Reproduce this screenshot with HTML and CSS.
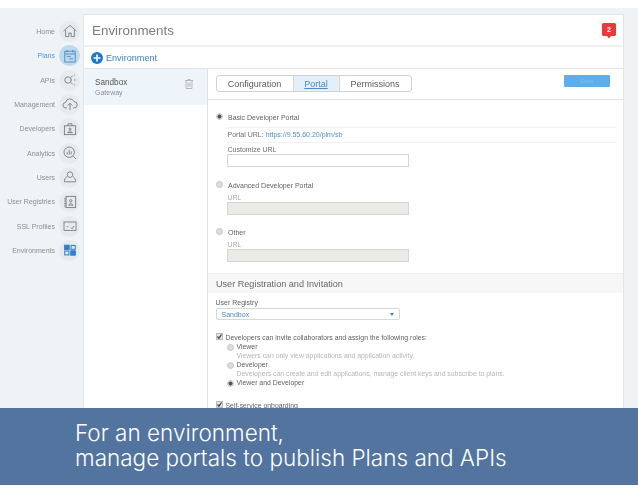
FILE: index.html
```html
<!DOCTYPE html>
<html lang="en">
<head>
<meta charset="utf-8">
<title>Environments</title>
<link rel="stylesheet" href="styles.css">
</head>
<body>
<div class="slide">
  <div class="app">
    <nav class="nav">
      <div class="nav-item"><span class="nav-label">Home</span><span class="nav-icon"><svg viewBox="0 0 20 20"><path d="M2 10 10 3l8 7M4.500 8.500V17h4v-4.500h3V17h4V8.500"/></svg></span></div>
      <div class="nav-item active"><span class="nav-label">Plans</span><span class="nav-icon"><svg viewBox="0 0 20 20"><rect x="3.500" y="4" width="13" height="13.500"/><path d="M6.500 2.500v3M13.500 2.500v3M3.500 7.500h13M6 10.500h5M9 13.500h5"/></svg></span></div>
      <div class="nav-item"><span class="nav-label">APIs</span><span class="nav-icon"><svg viewBox="0 0 20 20"><circle cx="7.500" cy="10" r="4"/><path d="M11 7 13.500 4.500M11.500 10h1M11 13l2.500 2.500M15 4h1M15 10h2M15 16h1"/></svg></span></div>
      <div class="nav-item"><span class="nav-label">Management</span><span class="nav-icon"><svg viewBox="0 0 20 20"><path d="M6 15H5a3.500 3.500 0 0 1-.5-7A5.500 5.500 0 0 1 15 7a4 4 0 0 1 0 8h-1M10 17.500V9.500M7 12l3-3 3 3"/></svg></span></div>
      <div class="nav-item"><span class="nav-label">Developers</span><span class="nav-icon"><svg viewBox="0 0 20 20"><rect x="3" y="6" width="14" height="11"/><path d="M7.500 6V3.500h5V6M6.500 14.500h7M8 14.500c0-3 4-3 4 0"/><circle cx="10" cy="10" r="1.200"/></svg></span></div>
      <div class="nav-item"><span class="nav-label">Analytics</span><span class="nav-icon"><svg viewBox="0 0 20 20"><circle cx="9" cy="9" r="6.500"/><path d="M14 14l3.500 3.500M6.500 12V9M9 12V6M11.500 12V8"/></svg></span></div>
      <div class="nav-item"><span class="nav-label">Users</span><span class="nav-icon"><svg viewBox="0 0 20 20"><circle cx="10" cy="7" r="3.500"/><path d="M6.500 9.500C4 11 3 13 3 16h14c0-3-1-5-3.500-6.500"/></svg></span></div>
      <div class="nav-item"><span class="nav-label">User Registries</span><span class="nav-icon"><svg viewBox="0 0 20 20"><rect x="5" y="3" width="12" height="14"/><path d="M2.500 6h3M2.500 9h3M2.500 12h3M2.500 15h3M8 14h6M9 14c0-3 4-3 4 0"/><circle cx="11" cy="8.500" r="1.500"/></svg></span></div>
      <div class="nav-item"><span class="nav-label">SSL Profiles</span><span class="nav-icon"><svg viewBox="0 0 20 20"><rect x="2.500" y="5" width="15" height="10.500"/><path d="M6 11h2M11 12l1.500 1.500L15 10"/></svg></span></div>
      <div class="nav-item"><span class="nav-label">Environments</span><span class="nav-icon env"><svg viewBox="0 0 20 20"><rect x="2" y="3" width="7" height="6.500"/><rect x="11.500" y="3.500" width="6" height="5.500" class="hollow"/><rect x="2.500" y="11.500" width="6" height="5.500" class="hollow"/><rect x="11" y="11" width="7" height="6.500"/></svg></span></div>
    </nav>
    <main class="panel">
      <header class="head">
        <h1 class="title">Environments</h1>
        <svg class="badge" viewBox="0 0 14 16"><path d="M1.500 0h11A1.500 1.500 0 0 1 14 1.500v10a1.500 1.500 0 0 1-1.500 1.500H9l-2 2.500L5 13H1.500A1.500 1.500 0 0 1 0 11.500v-10A1.500 1.500 0 0 1 1.500 0z"/><text x="7" y="8.500">2</text></svg>
      </header>
      <div class="toolbar">
        <svg class="plus" viewBox="0 0 12 12"><circle cx="6" cy="6" r="6"/><path d="M6 2.500v7M2.500 6h7"/></svg>
        <span>Environment</span>
      </div>
      <div class="body">
        <aside class="list">
          <div class="list-item">
            <div>
              <div class="list-name">Sandbox</div>
              <div class="list-sub">Gateway</div>
            </div>
            <svg class="trash" viewBox="0 0 8 10"><path d="M0 1.500h8M3 1.500V.5h2v1M1 1.500V9.500h6V1.500M3 3.500v4.500M5 3.500v4.500"/></svg>
          </div>
        </aside>
        <section class="detail">
          <div class="detail-top">
            <div class="tabs">
              <span class="tab tab-config">Configuration</span>
              <span class="tab tab-portal">Portal</span>
              <span class="tab tab-perm">Permissions</span>
            </div>
            <span class="save">Save</span>
          </div>
          <div class="portal">
            <div class="opt"><span class="radio on"></span><span class="opt-label">Basic Developer Portal</span></div>
            <div class="url-row">Portal URL: <a class="link">https://9.55.60.20/plm/sb</a></div>
            <label class="field-label">Customize URL</label>
            <div class="input enabled"></div>
            <div class="opt opt-next"><span class="radio"></span><span class="opt-label">Advanced Developer Portal</span></div>
            <label class="field-label muted">URL</label>
            <div class="input disabled"></div>
            <div class="opt opt-next"><span class="radio"></span><span class="opt-label">Other</span></div>
            <label class="field-label muted">URL</label>
            <div class="input disabled"></div>
          </div>
          <h2 class="section">User Registration and Invitation</h2>
          <div class="reg">
            <label class="reg-label">User Registry</label>
            <div class="select"><span>Sandbox</span><span class="caret"></span></div>
            <div class="check first"><svg class="box" viewBox="0 0 7 7"><rect x=".5" y=".5" width="6" height="6"/><path d="M1.500 3.500 3 5.200 5.500 1.500"/></svg>Developers can invite collaborators and assign the following roles:</div>
            <div class="roles">
              <div class="role"><span class="radio"></span>Viewer</div>
              <div class="role-desc">Viewers can only view applications and application activity.</div>
              <div class="role"><span class="radio"></span>Developer</div>
              <div class="role-desc">Developers can create and edit applications, manage client keys and subscribe to plans.</div>
              <div class="role"><span class="radio on"></span>Viewer and Developer</div>
            </div>
            <div class="check second"><svg class="box" viewBox="0 0 7 7"><rect x=".5" y=".5" width="6" height="6"/><path d="M1.500 3.500 3 5.200 5.500 1.500"/></svg>Self-service onboarding</div>
          </div>
        </section>
      </div>
    </main>
  </div>
  <div class="band">For an environment,<br>manage portals to publish Plans and APIs</div>
</div>
</body>
</html>
```
FILE: styles.css
```css
* { box-sizing: border-box; }
html, body { margin: 0; padding: 0; background: #fff; }
body { font-family: "Liberation Sans", Arial, sans-serif; }

.slide { position: relative; width: 638px; height: 493px; overflow: hidden; padding-top: 8px; }
.app { display: flex; height: 477px; overflow: hidden; background: #eff3f5; padding-top: 6px; filter: blur(0.35px); }

.nav { width: 83px; flex: none; padding-top: 5.200px; }
.nav-item { display: flex; align-items: center; justify-content: flex-end; gap: 4px; height: 24.350px; padding-right: 3px; }
.nav-label { font-size: 7px; color: #8b8f92; white-space: nowrap; }
.nav-icon { width: 21px; height: 21px; flex: none; border-radius: 50%; background: #e8ebed; display: flex; align-items: center; justify-content: center; }
.nav-icon svg { width: 16px; height: 16px; fill: none; stroke: #777c80; stroke-width: 1.100; }
.active .nav-label { color: #4d97d8; }
.active .nav-icon { background: #bcdaf0; }
.active .nav-icon svg { stroke: #4f87b5; }
.nav-icon.env svg { fill: #2e7fcf; stroke: #2e7fcf; width: 14px; height: 14px; }
.nav-icon.env svg .hollow { fill: none; stroke-width: 1.500; }

.panel { width: 541px; flex: none; background: #fff; border: 1px solid #e3e6e8; border-bottom: 0; }
.head { height: 32px; display: flex; align-items: center; justify-content: space-between; padding: 0 7.500px 0 8px; border-bottom: 2px solid #eef0f1; }
.title { margin: 0; font-size: 13.400px; font-weight: 400; color: #7a7d80; }
.badge { width: 14px; height: 16px; fill: #e8393c; margin-top: 1px; }
.badge text { fill: #fff; font-size: 7px; font-weight: 700; text-anchor: middle; stroke: none; }

.toolbar { height: 22px; display: flex; align-items: center; gap: 3px; padding-left: 7px; font-size: 9.100px; color: #3b86c6; border-bottom: 1px solid #e3e6e8; }
.plus { width: 12px; height: 12px; }
.plus circle { fill: #1f78c8; }
.plus path { stroke: #fff; stroke-width: 1.600; fill: none; }

.body { display: flex; }
.list { width: 123px; flex: none; }
.list-item { height: 36px; background: #edf5fb; padding: 8.500px 14px 0 11px; display: flex; justify-content: space-between; align-items: flex-start; }
.list-name { font-size: 8.200px; color: #555; line-height: 10px; }
.list-sub { font-size: 7px; color: #8d9194; line-height: 9px; }
.trash { width: 8px; height: 10px; margin-top: 1px; fill: none; stroke: #a6aaad; stroke-width: 0.800; }

.detail { flex: 1; border-left: 1px solid #dfe2e4; }
.detail-top { height: 31px; display: flex; justify-content: space-between; align-items: flex-start; padding: 6px 13.500px 0 7.500px; border-bottom: 1px solid #e0e3e5; }
.tabs { display: flex; height: 17px; border: 1px solid #cfd3d6; border-radius: 3px; font-size: 9px; color: #5a5d60; }
.tab { display: flex; align-items: center; justify-content: center; }
.tab-config { width: 76px; }
.tab-portal { width: 47px; background: #e3eff9; color: #4d8ac4; text-decoration: underline; border-left: 1px solid #d5d9dc; border-right: 1px solid #d5d9dc; }
.tab-perm { width: 71px; }
.save { width: 46px; height: 12px; background: #5caeed; border-radius: 1px; font-size: 6px; color: #7fbff0; display: flex; align-items: center; justify-content: center; }

.portal { padding: 0 7.500px 11px 7.500px; }
.opt { display: flex; align-items: center; height: 10px; margin-top: 12px; font-size: 7px; color: #5e6164; }
.radio { width: 7px; height: 7px; border-radius: 50%; background: #dadcde; border: 1px solid #c4c7c9; flex: none; display: inline-block; margin-right: 5.500px; margin-top: -2px; }
.radio.on { background: radial-gradient(circle, #555 0 1.800px, #dfe1e3 2.300px); }
.url-row { margin: 5px 0 0 11px; padding-left: 1px; height: 16px; line-height: 14px; font-size: 7px; color: #6a6d70; border-top: 1px solid #f0f1f2; border-bottom: 1px solid #f0f1f2; }
.link { color: #5a8fc2; }
.field-label { display: block; margin: 2px 0 0 12px; font-size: 7px; line-height: 9px; color: #6a6d70; }
.field-label.muted { color: #a8abad; }
.opt-next + .field-label { margin-top: 3px; }
.input { margin: 0 0 0 11px; width: 182px; height: 13px; border: 1px solid #d3d6d8; background: #fff; }
.input.enabled { margin-bottom: 13px; }
.input.enabled + .opt { margin-top: 0; }
.input.disabled { background: #ebebe6; }

.section { margin: 0; height: 20px; display: flex; align-items: center; padding-left: 8px; background: #f7f7f7; border-top: 1px solid #eeeeee; font-size: 9.100px; font-weight: 400; color: #65686b; }

.reg { padding: 5px 7.500px 0; font-size: 7px; color: #5e6164; }
.reg-label { display: block; font-size: 7px; line-height: 9px; color: #5e6164; }
.select { margin-top: 1px; width: 184px; height: 12px; border: 1px solid #d5d8da; border-radius: 2px; padding: 0 5px; display: flex; justify-content: space-between; align-items: center; color: #4d8ac4; font-size: 7px; }
.caret { width: 0; height: 0; border-left: 2px solid transparent; border-right: 2px solid transparent; border-top: 3px solid #3b86c6; }
.check { display: flex; align-items: center; font-size: 6.900px; height: 10px; color: #5e6164; }
.check.first { margin-top: 12px; }
.check.second { margin-top: 13px; }
.box { width: 7px; height: 7px; flex: none; margin-right: 3px; margin-top: -2px; }
.box rect { fill: #e4e5e6; stroke: #bbbbbb; stroke-width: 1; }
.box path { fill: none; stroke: #444; stroke-width: 1.300; }
.roles { padding-left: 11px; }
.role { display: flex; align-items: center; height: 9px; font-size: 6.900px; color: #5e6164; }
.role .radio { margin-right: 3px; margin-top: 2px; }
.role-desc { height: 9px; line-height: 9px; padding-left: 10px; font-size: 6.870px; color: #b3b6b8; white-space: nowrap; }

.band { position: absolute; left: 0; top: 408px; width: 638px; height: 77px; padding: 12px 0 0 75px; background: #52749f; color: #fff; font-family: "Inter", "Liberation Sans", sans-serif; font-size: 22.500px; line-height: 25px; font-weight: 300; }
```
